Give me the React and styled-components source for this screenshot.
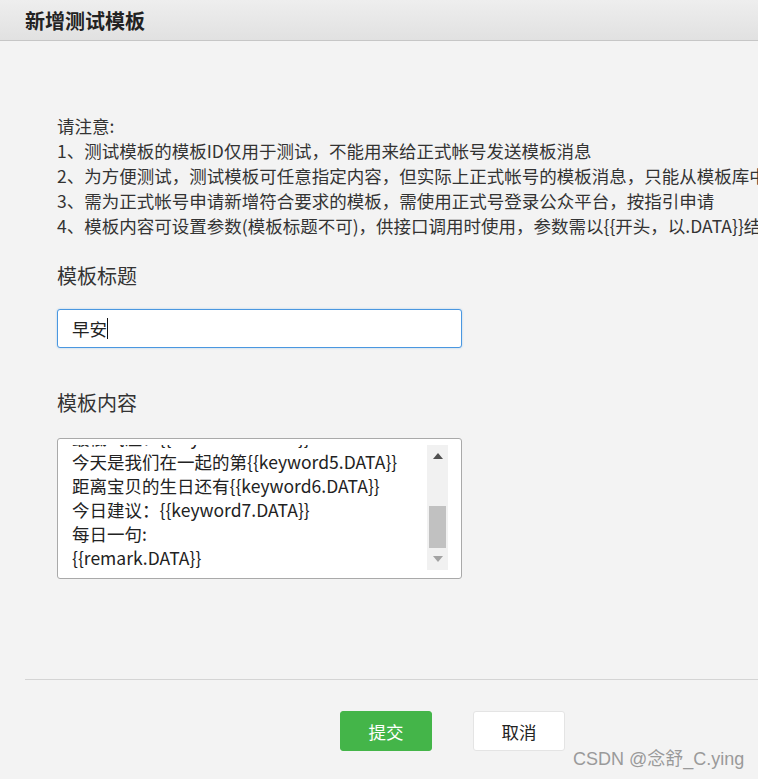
import React, { useLayoutEffect, useRef } from 'react';
import styled, { createGlobalStyle } from 'styled-components';

const GlobalStyle = createGlobalStyle`
  html, body {
    margin: 0;
    background: #f3f3f3;
    overflow: hidden;
  }
  body {
    font-family: "Noto Sans CJK SC", "Noto Sans", sans-serif;
    color: #333;
  }
`;

// Page frame
const Page = styled.div`
  position: relative;
  width: 758px;
  height: 779px;
  overflow: hidden;
`;

// Title bar across the top
const TitleBar = styled.header`
  height: 40px;
  display: flex;
  align-items: center;
  padding-left: 25px;
  background: linear-gradient(#eeeeee, #e1e1e1);
  border-bottom: 1px solid #c6c6c6;
  font-size: 20px;
  font-weight: 700;
  color: #222;
`;

const Body = styled.div`
  padding-left: 25px;
`;

const Form = styled.div`
  padding: 72px 0 0 32px;
`;

const Notice = styled.div`
  font-size: 17.5px;
  line-height: 25px;
  color: #333;
  white-space: nowrap;
`;

const Label = styled.div`
  font-size: 20px;
  line-height: 28px;
  color: #333;
  margin-top: ${p => p.$gap}px;
`;

const TextInput = styled.div`
  box-sizing: border-box;
  width: 405px;
  height: 39px;
  margin-top: 19px;
  padding-left: 14px;
  display: flex;
  align-items: center;
  background: #fff;
  border: 1px solid #4a97e0;
  border-radius: 3px;
  box-shadow: 0 0 2px rgba(74, 151, 224, 0.45);
  font-size: 17.5px;
  color: #222;
`;

const Caret = styled.span`
  display: inline-block;
  width: 1px;
  height: 21px;
  background: #111;
`;

// Multi-line template box with its own scrollbar
const TextBox = styled.div`
  box-sizing: border-box;
  width: 405px;
  height: 141px;
  margin-top: 21px;
  padding: 6px 13px 8px 14px;
  display: flex;
  background: #fff;
  border: 1px solid #a9a9a9;
  border-radius: 3px;
`;

const Viewport = styled.div`
  flex: 1;
  height: 125px;
  overflow: hidden;
  font-size: 17.5px;
  line-height: 24px;
  color: #222;
  white-space: pre;
`;

const ScrollBar = styled.div`
  width: 21px;
  height: 125px;
  display: flex;
  flex-direction: column;
  background: #f1f1f1;
`;

const Arrow = styled.div`
  height: 22px;
  display: flex;
  align-items: center;
  justify-content: center;
  &::before {
    content: '';
    border-left: 5px solid transparent;
    border-right: 5px solid transparent;
    ${p => (p.$down
      ? 'border-top: 6px solid #a3a3a3;'
      : 'border-bottom: 6px solid #505050;')}
  }
`;

const Track = styled.div`
  flex: 1;
  display: flex;
  flex-direction: column;
  justify-content: flex-end;
`;

const Thumb = styled.div`
  height: 42px;
  margin: 0 2px;
  background: #c1c1c1;
`;

const Divider = styled.hr`
  margin: 100px 0 0;
  border: 0;
  border-top: 1px solid #d4d4d4;
`;

const Actions = styled.div`
  display: flex;
  gap: 41px;
  padding: 31px 0 0 315px;
`;

const Button = styled.button`
  box-sizing: border-box;
  width: 92px;
  height: 40px;
  border-radius: 3px;
  font-family: inherit;
  font-size: 17.5px;
  cursor: pointer;
  background: ${p => (p.$primary ? '#44b549' : '#fff')};
  color: ${p => (p.$primary ? '#fff' : '#222')};
  border: 1px solid ${p => (p.$primary ? '#44b549' : '#e4e4e4')};
`;

const Watermark = styled.div`
  position: absolute;
  left: 573px;
  top: 748px;
  font-family: "Liberation Sans", "Noto Sans CJK SC", sans-serif;
  font-size: 18px;
  line-height: 22px;
  color: #9a9a9a;
  white-space: nowrap;
`;

const notices = [
  '请注意:',
  '1、测试模板的模板ID仅用于测试，不能用来给正式帐号发送模板消息',
  '2、为方便测试，测试模板可任意指定内容，但实际上正式帐号的模板消息，只能从模板库中获得',
  '3、需为正式帐号申请新增符合要求的模板，需使用正式号登录公众平台，按指引申请',
  '4、模板内容可设置参数(模板标题不可)，供接口调用时使用，参数需以{{开头，以.DATA}}结尾',
];

const templateText = [
  '{{first.DATA}}',
  '日期：{{keyword1.DATA}}',
  '城市：{{keyword2.DATA}}',
  '天气：{{keyword3.DATA}}',
  '最低气温：{{keyword4.DATA}}',
  '今天是我们在一起的第{{keyword5.DATA}}',
  '距离宝贝的生日还有{{keyword6.DATA}}',
  '今日建议：{{keyword7.DATA}}',
  '每日一句:',
  '{{remark.DATA}}',
].join('\n');

export default function App() {
  const viewRef = useRef(null);

  // keep the template box scrolled to its last line
  useLayoutEffect(() => {
    const el = viewRef.current;
    if (el) el.scrollTop = el.scrollHeight - el.clientHeight;
  }, []);

  return (
    <Page>
      <GlobalStyle />
      <TitleBar>新增测试模板</TitleBar>
      <Body>
        <Form>
          <Notice>
            {notices.map(line => (
              <div key={line}>{line}</div>
            ))}
          </Notice>

          <Label $gap={24}>模板标题</Label>
          <TextInput>
            早安<Caret />
          </TextInput>

          <Label $gap={41}>模板内容</Label>
          <TextBox>
            <Viewport ref={viewRef}>{templateText}</Viewport>
            <ScrollBar>
              <Arrow />
              <Track>
                <Thumb />
              </Track>
              <Arrow $down />
            </ScrollBar>
          </TextBox>
        </Form>

        <Divider />
        <Actions>
          <Button $primary>提交</Button>
          <Button>取消</Button>
        </Actions>
      </Body>
      <Watermark>CSDN @念舒_C.ying</Watermark>
    </Page>
  );
}
